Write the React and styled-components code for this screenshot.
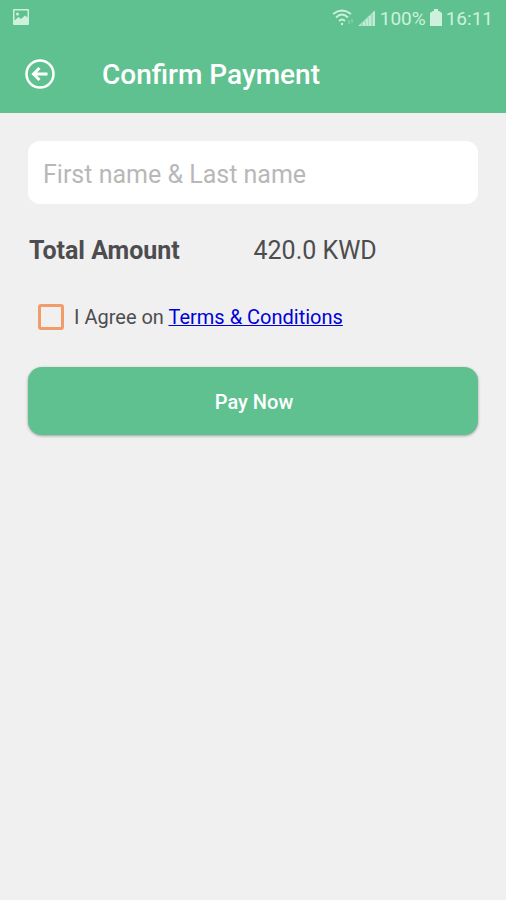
import React from "react";
import styled, { createGlobalStyle } from "styled-components";

const GlobalStyle = createGlobalStyle`
  * { box-sizing: border-box; }
  body { margin: 0; background: #f0f0f0; font-family: Roboto, "Liberation Sans", sans-serif; }
`;

const Header = styled.header`
  background: #5fc190;
  color: #fff;
`;

const StatusBar = styled.div`
  display: flex;
  align-items: center;
  justify-content: space-between;
  height: 36px;
  padding: 0 13px 0 12px;
  color: #cdf1dd;
  font-size: 19px;
`;

const StatusGroup = styled.div`
  display: flex;
  align-items: center;
  gap: 4px;
`;

const AppBar = styled.div`
  display: flex;
  align-items: center;
  gap: 46px;
  height: 77px;
  padding: 0 24px;
`;

const BackButton = styled.button`
  display: flex;
  padding: 0;
  border: 0;
  background: none;
  color: inherit;
`;

const Title = styled.h1`
  margin: 0;
  font-size: 28px;
  font-weight: 500;
`;

const Form = styled.form`
  display: flex;
  flex-direction: column;
  padding: 28px;
`;

const NameInput = styled.input`
  width: 100%;
  height: 63px;
  padding: 3px 15px 0;
  border: 0;
  border-radius: 12px;
  background: #fff;
  color: #4d4d4d;
  font: 400 25px Roboto, sans-serif;
  &::placeholder { color: #b8b8b8; opacity: 1; }
`;

const AmountRow = styled.div`
  display: grid;
  grid-template-columns: 1fr 1fr;
  margin-top: 31px;
  padding-left: 1px;
  color: #4d4d4f;
  font-size: 25px;
  line-height: 32px;
`;

const AmountLabel = styled.span`
  font-weight: 700;
`;

const Agreement = styled.div`
  display: flex;
  align-items: center;
  gap: 10px;
  margin-top: 35px;
  padding-left: 10px;
  color: #4d4d4f;
  font-size: 20px;
  line-height: 30px;
`;

const CheckBox = styled.input`
  appearance: none;
  width: 26px;
  height: 26px;
  margin: 0;
  border: 3px solid #f39c6b;
  border-radius: 3px;
  &:checked { background: #f39c6b; }
`;

const TermsLink = styled.a`
  color: #0000d8;
  text-decoration-thickness: 1px;
`;

const PayButton = styled.button`
  height: 68px;
  margin-top: 35px;
  padding: 2px 0 0 2px;
  border: 0;
  border-radius: 14px;
  background: #5fc190;
  box-shadow: 0 1px 3px rgba(0, 0, 0, 0.35);
  color: #fff;
  font: 500 20px Roboto, sans-serif;
`;

export default function App() {
  return (
    <>
      <GlobalStyle />
      <Header>
        <StatusBar>
          <svg width="18" height="18" viewBox="0 0 18 18" fill="currentColor" aria-hidden="true">
            <path fillRule="evenodd" d="M2 0h14a1 1 0 0 1 1 1v14a1 1 0 0 1-1 1H2a1 1 0 0 1-1-1V1a1 1 0 0 1 1-1zm.5 1.500v10l4-3.500 2.500 2 4-3.500 2.500 2V1.500z" />
            <circle cx="5.500" cy="5" r="1.500" />
          </svg>
          <StatusGroup>
            <svg width="22" height="18" viewBox="0 0 22 18" fill="none" stroke="currentColor" strokeWidth="1.800" aria-hidden="true">
              <path d="M1 5q9-7 18 0M4 8.500q6-6 12 0M7 12q3-3 6 0" />
              <circle cx="10" cy="15" r="1.200" fill="currentColor" stroke="none" />
              <path d="M17 11v4M20 10v4" strokeWidth="1" opacity=".5" />
            </svg>
            <svg width="18" height="18" viewBox="0 0 18 18" fill="currentColor" aria-hidden="true">
              <path d="M0 17L17 1v16z" opacity=".6" />
              <path d="M1 17v-1h2v1zM5 17v-4h2v4zM8 17v-7h2v7zM11 17V7h2v10zM15 17V3h2v14z" opacity=".7" />
            </svg>
            <span>100%</span>
            <svg width="12" height="18" viewBox="0 0 12 18" fill="currentColor" aria-hidden="true">
              <path d="M4 0h4v2h1l3 2v13H0V4l3-2h1z" />
            </svg>
            <span>16:11</span>
          </StatusGroup>
        </StatusBar>
        <AppBar>
          <BackButton type="button" aria-label="Back">
            <svg width="32" height="32" viewBox="0 0 32 32" fill="none" stroke="currentColor" strokeWidth="2.500">
              <circle cx="16" cy="15" r="13.500" />
              <path d="M23.500 15H10M15.500 9l-6 6 6 6" strokeWidth="3" />
            </svg>
          </BackButton>
          <Title>Confirm Payment</Title>
        </AppBar>
      </Header>
      <Form onSubmit={(event) => event.preventDefault()}>
        <NameInput type="text" aria-label="First name and last name" placeholder="First name & Last name" />
        <AmountRow>
          <AmountLabel>Total Amount</AmountLabel>
          <span>420.0 KWD</span>
        </AmountRow>
        <Agreement>
          <CheckBox type="checkbox" id="agree" />
          <span>
            <label htmlFor="agree">I Agree on </label>
            <TermsLink href="#terms">Terms &amp; Conditions</TermsLink>
          </span>
        </Agreement>
        <PayButton type="submit">Pay Now</PayButton>
      </Form>
    </>
  );
}
